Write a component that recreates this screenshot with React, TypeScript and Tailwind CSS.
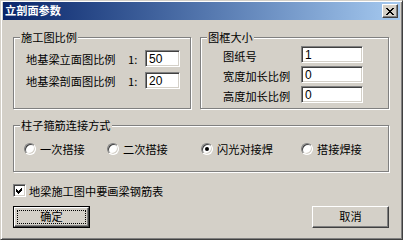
import React from "react";

const font = "font-['SimSun','Noto_Sans_CJK_SC',sans-serif]";

const GroupBox = ({
  title,
  className,
  children,
}: {
  title: string;
  className?: string;
  children: React.ReactNode;
}) => (
  <div
    className={`relative border border-[#808080] shadow-[inset_1px_1px_0_#fff,1px_1px_0_#fff] ${className ?? ""}`}
  >
    <span className="absolute -top-[8px] left-[6px] bg-[#d4d0c8] px-[1px] text-[11.2px] leading-[14px] text-black">
      {title}
    </span>
    {children}
  </div>
);

const TextBox = ({ value, className }: { value: string; className?: string }) => (
  <div
    className={`flex h-[17px] items-center border border-t-[#808080] border-l-[#808080] border-r-white border-b-white bg-white pl-[3px] shadow-[inset_1px_1px_0_#404040,inset_-1px_-1px_0_#d4d0c8] font-['Liberation_Sans',sans-serif] text-[12px] leading-none text-black ${className ?? ""}`}
  >
    {value}
  </div>
);

const Radio = ({ label, checked, className }: { label: string; checked?: boolean; className?: string }) => (
  <div className={`flex h-[13px] items-center ${className ?? ""}`}>
    <div className="flex h-[12px] w-[12px] shrink-0 items-center justify-center rounded-full border border-t-[#808080] border-l-[#808080] border-r-white border-b-white bg-white shadow-[inset_1px_1px_0_#404040,inset_-1px_-1px_0_#d4d0c8]">
      {checked && <div className="h-[4px] w-[4px] rounded-full bg-black" />}
    </div>
    <span className="ml-[4px] text-[11.2px] leading-[14px] text-black">{label}</span>
  </div>
);

const Button = ({ label, isDefault }: { label: string; isDefault?: boolean }) => (
  <div className={`h-[22px] w-[77px] ${isDefault ? "border border-black" : ""}`}>
    <div className="flex h-full w-full items-center justify-center border border-t-white border-l-white border-r-[#404040] border-b-[#404040] shadow-[inset_-1px_-1px_0_#808080] p-[2px]">
      <div
        className={`flex h-full w-full items-center justify-center text-[11.2px] leading-none text-black ${isDefault ? "border border-dotted border-black" : ""}`}
      >
        {label}
      </div>
    </div>
  </div>
);

export default function App() {
  return (
    <div
      className={`${font} flex h-[240px] w-[403px] flex-col border border-t-[#d4d0c8] border-l-[#d4d0c8] border-r-[#404040] border-b-[#404040] bg-[#d4d0c8] px-[2px] pb-[2px] pt-[1px] shadow-[inset_1px_1px_0_#fff,inset_-1px_-1px_0_#808080]`}
    >
      {/* Title bar */}
      <div className="flex h-[18px] shrink-0 items-center justify-between bg-linear-to-r from-[#0a246a] to-[#a6caf0] pl-[2px] pr-[2px]">
        <span className="text-[11.2px] font-bold leading-none text-white">立剖面参数</span>
        <div className="flex h-[14px] w-[16px] items-center justify-center border border-t-white border-l-white border-r-[#404040] border-b-[#404040] bg-[#d4d0c8] shadow-[inset_-1px_-1px_0_#808080]">
          <svg width="8" height="7" viewBox="0 0 8 7" shapeRendering="crispEdges">
            <path
              d="M0 0h2v1h-2zM6 0h2v1h-2zM1 1h2v1h-2zM5 1h2v1h-2zM2 2h4v1h-4zM3 3h2v1h-2zM2 4h4v1h-4zM1 5h2v1h-2zM5 5h2v1h-2zM0 6h2v1h-2zM6 6h2v1h-2z"
              fill="#000"
            />
          </svg>
        </div>
      </div>

      {/* Body */}
      <div className="flex flex-col pl-[10px] pr-[11px]">
        <div className="mt-[17px] flex gap-[9px]">
          <GroupBox title="施工图比例" className="h-[72px] w-[178px]">
            <div className="flex flex-col gap-[5px] pl-[12px] pt-[12px]">
              <div className="flex h-[17px] items-center">
                <span className="w-[102px] text-[11.2px] leading-[14px]">地基梁立面图比例</span>
                <span className="w-[17px] text-[11.2px] leading-[14px]">1:</span>
                <TextBox value="50" className="w-[35px]" />
              </div>
              <div className="flex h-[17px] items-center">
                <span className="w-[102px] text-[11.2px] leading-[14px]">地基梁剖面图比例</span>
                <span className="w-[17px] text-[11.2px] leading-[14px]">1:</span>
                <TextBox value="20" className="w-[35px]" />
              </div>
            </div>
          </GroupBox>

          <GroupBox title="图框大小" className="h-[72px] w-[189px]">
            <div className="flex flex-col gap-[3px] pl-[22px] pt-[8px]">
              {[
                ["图纸号", "1"],
                ["宽度加长比例", "0"],
                ["高度加长比例", "0"],
              ].map(([label, value]) => (
                <div key={label} className="flex h-[17px] items-center">
                  <span className="w-[78px] pt-[3px] text-[11.2px] leading-[14px]">{label}</span>
                  <TextBox value={value} className="w-[62px]" />
                </div>
              ))}
            </div>
          </GroupBox>
        </div>

        <GroupBox title="柱子箍筋连接方式" className="mt-[16px] h-[47px] w-[376px]">
          <div className="flex pl-[10px] pt-[16px]">
            <Radio label="一次搭接" className="w-[83px]" />
            <Radio label="二次搭接" className="w-[94px]" />
            <Radio label="闪光对接焊" checked className="w-[100px]" />
            <Radio label="搭接焊接" />
          </div>
        </GroupBox>

        <div className="mt-[12px] flex h-[13px] items-center">
          <div className="flex h-[13px] w-[13px] items-center justify-center border border-t-[#808080] border-l-[#808080] border-r-white border-b-white bg-white shadow-[inset_1px_1px_0_#404040,inset_-1px_-1px_0_#d4d0c8]">
            <svg width="7" height="7" viewBox="0 0 7 7" shapeRendering="crispEdges">
              <path d="M6 0v3l-4 4-2-2v-3l2 2z" fill="#000" />
            </svg>
          </div>
          <span className="ml-[3px] text-[11.2px] leading-[14px]">地梁施工图中要画梁钢筋表</span>
        </div>

        <div className="mt-[9px] flex justify-between">
          <Button label="确定" isDefault />
          <Button label="取消" />
        </div>
      </div>
    </div>
  );
}
